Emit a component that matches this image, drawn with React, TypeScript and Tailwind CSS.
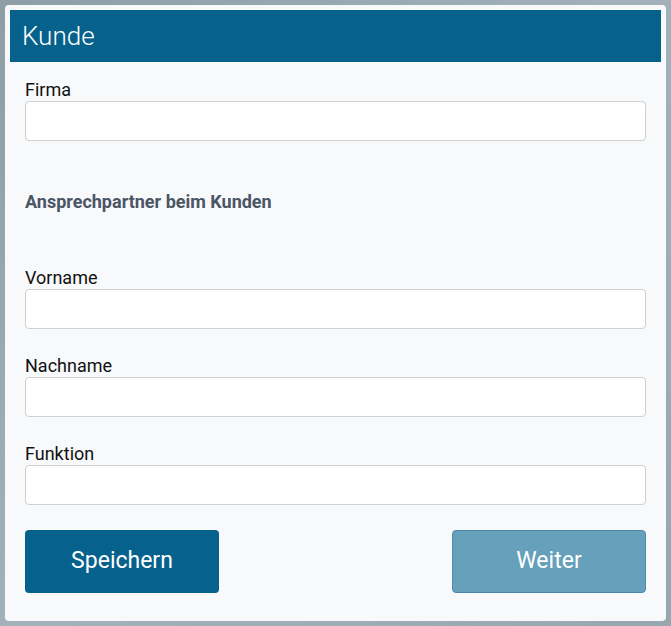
import React from "react";

function Field({ label }: { label: string }) {
  return (
    <div className="flex flex-col">
      <label className="text-[18px] leading-[21px] text-[#111] mb-[1px]">{label}</label>
      <input className="h-[40px] w-full rounded-[4px] border border-[#cfcfcf] bg-white px-3 outline-none" />
    </div>
  );
}

export default function App() {
  return (
    <div
      className="w-[671px] h-[626px] p-[5px] bg-[linear-gradient(135deg,#8d9ea7_0%,#a3b2ba_50%,#97a7b0_100%)]"
      style={{ fontFamily: "Roboto, 'Liberation Sans', sans-serif" }}
    >
      <div className="h-[616px] w-[661px] rounded-[4px] bg-[#f8f9fb] p-[5px]">
        <div className="h-[52px] bg-[#06618c] px-[12px] flex items-center">
          <h1 className="text-[26px] font-light text-white leading-none">Kunde</h1>
        </div>
        <div className="px-[15px] pt-[17px]">
          <Field label="Firma" />
          <h2 className="mt-[50px] text-[18px] font-bold text-[#4a5565] leading-[21px]">
            Ansprechpartner beim Kunden
          </h2>
          <div className="mt-[55px] flex flex-col gap-[26px]">
            <Field label="Vorname" />
            <Field label="Nachname" />
            <Field label="Funktion" />
          </div>
          <div className="mt-[25px] flex justify-between">
            <button className="h-[63px] w-[194px] rounded-[4px] bg-[#06618c] text-white text-[23px]">
              Speichern
            </button>
            <button className="h-[63px] w-[194px] rounded-[4px] bg-[#66a0bb] border border-[#4b89a9] text-white text-[23px]">
              Weiter
            </button>
          </div>
        </div>
      </div>
    </div>
  );
}
